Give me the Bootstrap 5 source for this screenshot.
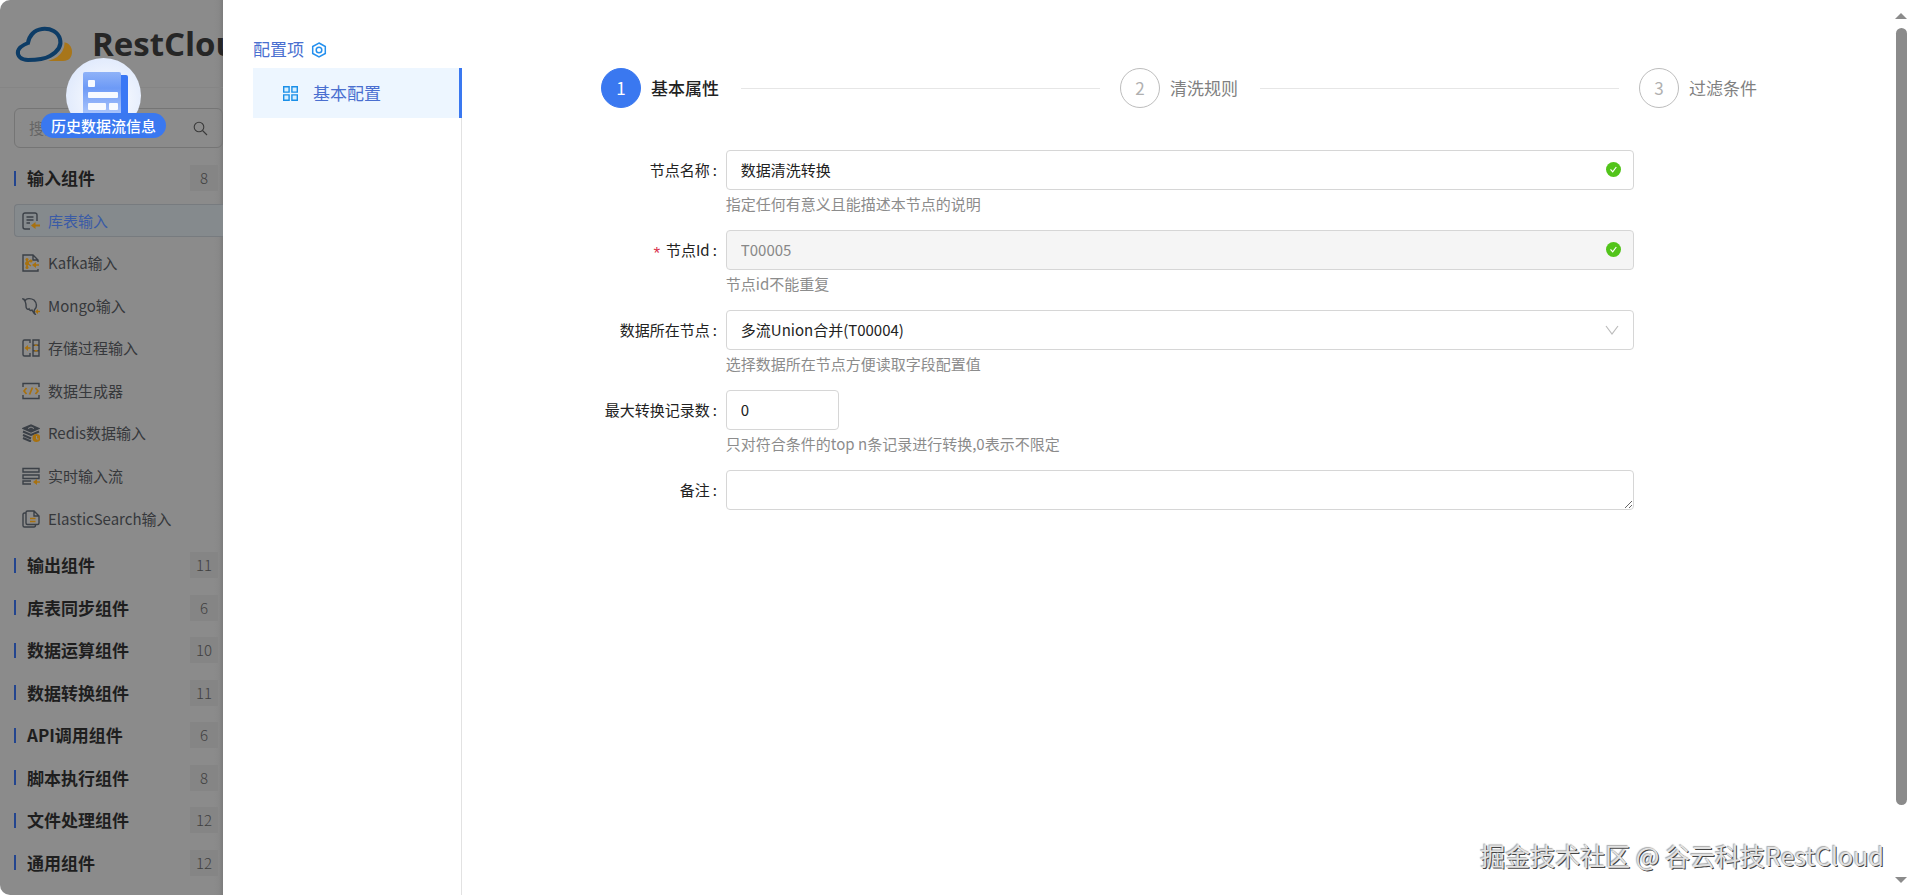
<!DOCTYPE html>
<html lang="zh-CN">
<head>
<meta charset="utf-8">
<meta name="viewport" content="width=device-width, initial-scale=1">
<title>RestCloud 数据清洗转换</title>
<link href="https://cdn.jsdelivr.net/npm/bootstrap@5.3.0/dist/css/bootstrap.min.css" rel="stylesheet">
<style>
  :root { --brand: #3a78f0; --ink: #222; --hint: #8c8c8c; --line: #d6d6d6; --dim: #8b8b8b; }
  body { font-family: "Noto Sans CJK SC", "Noto Sans", sans-serif; font-size: 15px; line-height: 24px; color: var(--ink); background: #fff; }
  a { text-decoration: none; color: inherit; }
  svg { display: block; flex: none; }

  /* dimmed component library behind the drawer */
  .library { width: 223px; flex: none; background: linear-gradient(to left, #7c7c7c, #888 4px, var(--dim) 9px); border-radius: 10px 0 0 10px; color: #36383b; padding-bottom: 11px; }
  .library-head { height: 88px; padding: 0 0 0 14px; gap: 18px; border-bottom: 1px solid #858585; }
  .wordmark { font: 700 33px/40px "Open Sans", sans-serif; color: #262626; }
  .library-search { height: 40px; margin: 20px 0 9px 14px; border: 1px solid #757575; border-radius: 6px; padding: 0 14px; }
  .library-search input { background: none; border: 0; outline: 0; padding: 0; width: 100%; min-width: 0; }
  .library-search input::placeholder { color: #666; opacity: 1; }
  .group-row { flex: 1 1 42px; padding: 0 5px 0 14px; font-size: 17px; font-weight: 700; color: #1e1e1e; }
  .group-row::before { content: ""; width: 2px; height: 15px; background: #23458f; margin-right: 11px; }
  .tally { width: 28px; line-height: 26px; background: #858585; color: #404040; font-size: 15px; font-weight: 300; text-align: center; }
  .row-list { flex: 8 1 336px; }
  .node-row { flex: 1 1 42px; padding-left: 14px; }
  .node-row a { height: 33px; padding-left: 7px; gap: 8px; border: 1px solid transparent; border-right: 0; border-radius: 4px 0 0 4px; }
  .node-row a.current { background: #858a8d; border-color: #777b7f; color: #3a5ba6; }
  .ico { fill: none; stroke: #3b4047; stroke-width: 1.4; }
  .ico .o { stroke: #a8710f; }
  .ico .of { fill: #a8710f; stroke: none; }

  .history { left: 41px; top: 58px; width: 125px; }
  .history span { background: var(--brand); color: #fff; font-weight: 500; line-height: 25px; border-radius: 13px; margin-top: -20px; z-index: 1; }

  /* drawer */
  .settings { width: 239px; flex: none; padding-left: 30px; }
  .settings-title { height: 68px; padding-top: 37px; gap: 7px; font-size: 17px; color: #4a6fd0; }
  .settings-menu { border-right: 1px solid #e2e2e2; }
  .settings-menu a { height: 50px; margin-right: -1px; padding-left: 30px; gap: 15px; background: #edf6ff; border-right: 3px solid var(--brand); color: #4a6fd0; font-size: 17px; }
  .wizard { padding: 68px 135px 0 139px; margin-bottom: 42px; font-size: 17px; color: #808080; }
  .wizard li { gap: 10px; }
  .wizard .dot { width: 40px; height: 40px; border: 1px solid #bdbdbd; border-radius: 50%; color: #b0b0b0; }
  .wizard .on { color: #222; font-weight: 500; }
  .wizard .on .dot { background: var(--brand); border-color: var(--brand); color: #fff; font-weight: 400; }
  .wizard .rule { height: 1px; background: #e6e6e6; margin: 0 20px 0 12px; }
  .field { display: grid; grid-template-columns: 264fr 909fr 258fr; min-height: 80px; }
  .field > label { text-align: right; line-height: 40px; padding-right: 9px; }
  .field > label::after { content: ":"; margin-left: 3px; }
  .need { color: #d9304c; margin-right: 4px; font-family: "Liberation Mono", monospace; font-size: 17px; line-height: 20px; vertical-align: -3px; }
  .field .form-control, .field .form-select { height: 40px; min-height: 40px; padding: 0 14px; border: 1px solid var(--line); border-radius: 4px; font-size: 15px; line-height: 38px; color: var(--ink); background-image: none; }
  .field input.form-control { padding-bottom: 2px; }
  .field .form-control:disabled { background-color: #f5f5f5; color: #888; }
  .field .short { width: 113px; }
  .field .help { color: var(--hint); line-height: 24px; padding-top: 2px; }
  .mark-end { right: 13px; top: 12px; pointer-events: none; }

  .scroller { width: 18px; flex: none; padding: 13px 0 12px; }
  .scroller .thumb { width: 11px; flex: 777; margin-top: 9px; border-radius: 6px; background: #8b8b8b; }
  .scroller .rest { flex: 72; }
  .credit { right: 26px; bottom: 22px; font-size: 25px; line-height: 36px; color: #e2e2e2; text-shadow: 1px 1px 0 #444, -1px -1px 1px #aaa; }
</style>
</head>
<body>
<div class="d-flex min-vh-100 position-relative">

  <aside class="library d-flex flex-column overflow-hidden">
    <header class="library-head d-flex align-items-center">
      <svg width="60" height="40" viewBox="0 0 60 40">
        <path d="M34 37h15c6 0 9-4 9-9 0-6-4-10-10-10z" fill="#a8761a"/>
        <path d="M12 35C6 35 3 31 4 26c1-4 5-7 10-7 0-8 5-14 14-15 9-1 15 3 18 10 3 8-1 16-11 19-8 3-16 2-23 2z" fill="#8b8b8b" stroke="#8b8b8b" stroke-width="7"/>
        <path d="M14 36C7 36 3 32 4 27c1-4 5-6 10-8 1-7 6-13 14-14 9-1 16 3 18 10 2 7-3 13-10 17-7 4-15 4-22 4z" fill="#8b8b8b" stroke="#0d3c66" stroke-width="4"/>
      </svg>
      <span class="wordmark">RestCloud</span>
    </header>

    <div class="library-search d-flex align-items-center">
      <input type="text" placeholder="搜索组件" aria-label="搜索组件">
      <svg width="15" height="15" viewBox="0 0 15 15" fill="none" stroke="#3a3a3a" stroke-width="1.100"><circle cx="6" cy="6" r="4.800"/><path d="M9.500 9.500 14 14"/></svg>
    </div>

    <a href="#" class="group-row d-flex align-items-center"><span class="flex-fill">输入组件</span><span class="tally">8</span></a>

    <ul class="row-list list-unstyled d-flex flex-column mb-1">
      <li class="node-row d-flex flex-column justify-content-center"><a href="#" class="current d-flex align-items-center">
        <svg class="ico" width="18" height="18" viewBox="0 0 18 18"><path d="M15 9V3a2 2 0 0 0-2-2H3a2 2 0 0 0-2 2v12a2 2 0 0 0 2 2h5M4.500 5h7M4.500 8h7M4.500 11H8"/><path class="o" stroke-width="1.800" d="M18 13.500h-6"/><path class="of" d="M9 13.500l4.500-3.500v7z"/></svg>库表输入</a></li>
      <li class="node-row d-flex flex-column justify-content-center"><a href="#" class="d-flex align-items-center">
        <svg class="ico" width="18" height="18" viewBox="0 0 18 18"><path d="M16 8V6l-5-5H1v16h15v-2M11 1v5h5"/><path class="o" d="M5 5v9M5 9l4-3M5 9l4 3M17 11h-4"/><circle class="of" cx="5" cy="5.500" r="1.500"/><circle class="of" cx="5" cy="9.500" r="2"/><circle class="of" cx="5" cy="13.500" r="1.500"/><circle class="of" cx="9" cy="7" r="1.500"/><path class="of" d="M10 11l4-3v6z"/></svg>Kafka输入</a></li>
      <li class="node-row d-flex flex-column justify-content-center"><a href="#" class="d-flex align-items-center">
        <svg class="ico" width="18" height="18" viewBox="0 0 18 18"><path d="M1 2c2 0 1 1 2 2 1-3 6-3 9-1 3 3 3 7 1 9-1 1-1 3 0 5-2-1-2-3-3-4-1 1-3 0-3-1-2 1-3-1-3-3 0-3 0-5-3-7z"/><path class="of" d="M13 14.500l3-2.500v5z"/><path class="o" d="M15 14.500h3"/></svg>Mongo输入</a></li>
      <li class="node-row d-flex flex-column justify-content-center"><a href="#" class="d-flex align-items-center">
        <svg class="ico" width="18" height="18" viewBox="0 0 18 18"><path d="M8 4V1H2.500A1.500 1.500 0 0 0 1 2.500v13A1.500 1.500 0 0 0 2.500 17H8v-3M11 1h6v16h-6zM11 6.300h6M11 11.700h6"/><path class="o" d="M8.500 9H4M12.500 6.300h3M12.500 11.700h3"/><path class="of" d="M2.500 9l3.500-3v6z"/></svg>存储过程输入</a></li>
      <li class="node-row d-flex flex-column justify-content-center"><a href="#" class="d-flex align-items-center">
        <svg class="ico" width="18" height="18" viewBox="0 0 18 18"><path d="M1 5V1.500h16V5M1 13v3.500h16V13"/><path class="o" stroke-width="1.700" d="M4.500 6 2 9l2.500 3M13.500 6 16 9l-2.500 3M10.500 5.500l-3 7"/></svg>数据生成器</a></li>
      <li class="node-row d-flex flex-column justify-content-center"><a href="#" class="d-flex align-items-center">
        <svg class="ico" width="18" height="18" viewBox="0 0 18 18"><path fill="#3b4047" d="M1 4.500 9 1l8 3.500L9 8z"/><path stroke-width="2" d="M1 7.500l8 3.500 8-3.500M1 11l8 3.500M1 14l8 3.500"/><path stroke="#8b8b8b" stroke-width="1" d="M6 4.500l3-1.500 3 1.500"/><circle class="of" cx="14.500" cy="14" r="4"/><path stroke="#8b8b8b" stroke-width="1" d="M14.500 12v3h2"/></svg>Redis数据输入</a></li>
      <li class="node-row d-flex flex-column justify-content-center"><a href="#" class="d-flex align-items-center">
        <svg class="ico" width="18" height="18" viewBox="0 0 18 18"><path d="M1 1.500h16v3.500H1zM1 8h16v3.500H1zM9 14H1v3h8"/><path class="o" d="M18 15h-4"/><path class="of" d="M11 15l4-3v6z"/></svg>实时输入流</a></li>
      <li class="node-row d-flex flex-column justify-content-center"><a href="#" class="d-flex align-items-center">
        <svg class="ico" width="18" height="18" viewBox="0 0 18 18"><path d="M4 3H2.500Q1 3 1 4.500v11Q1 17 2.500 17H12q1.500 0 1.500-2M12 1H5.500Q4 1 4 2.500v10.500Q4 14.500 5.500 14.500h10q1.500 0 1.500-1.500V6zM12 1v5h5"/><path class="o" d="M8 8.500h5.500M8 11.500h5.500"/></svg>ElasticSearch输入</a></li>
    </ul>

    <nav class="row-list d-flex flex-column">
      <a href="#" class="group-row d-flex align-items-center"><span class="flex-fill">输出组件</span><span class="tally">11</span></a>
      <a href="#" class="group-row d-flex align-items-center"><span class="flex-fill">库表同步组件</span><span class="tally">6</span></a>
      <a href="#" class="group-row d-flex align-items-center"><span class="flex-fill">数据运算组件</span><span class="tally">10</span></a>
      <a href="#" class="group-row d-flex align-items-center"><span class="flex-fill">数据转换组件</span><span class="tally">11</span></a>
      <a href="#" class="group-row d-flex align-items-center"><span class="flex-fill">API调用组件</span><span class="tally">6</span></a>
      <a href="#" class="group-row d-flex align-items-center"><span class="flex-fill">脚本执行组件</span><span class="tally">8</span></a>
      <a href="#" class="group-row d-flex align-items-center"><span class="flex-fill">文件处理组件</span><span class="tally">12</span></a>
      <a href="#" class="group-row d-flex align-items-center"><span class="flex-fill">通用组件</span><span class="tally">12</span></a>
    </nav>
  </aside>

  <section class="settings d-flex flex-column">
    <div class="settings-title d-flex align-items-start">配置项
      <svg class="mt-1" width="16" height="18" viewBox="0 0 16 18" fill="none" stroke="#2490ee" stroke-width="1.500"><path d="M8 2l6.300 3.500v7L8 16l-6.300-3.500v-7z"/><circle cx="8" cy="9" r="2.800"/></svg>
    </div>
    <nav class="settings-menu flex-fill">
      <a href="#" class="d-flex align-items-center">
        <svg width="15" height="15" viewBox="0 0 15 15" fill="#d9efff" stroke="#1a8fe8" stroke-width="1.400"><path d="M.7.700h5.400v5.400H.7zM8.900.700h5.400v5.400H8.900zM.7 8.900h5.400v5.400H.7zM8.900 8.900h5.400v5.400H8.900z"/></svg>基本配置</a>
    </nav>
  </section>

  <main class="flex-fill">
    <ol class="wizard list-unstyled d-flex">
      <li class="on d-flex align-items-center flex-fill"><span class="dot d-flex align-items-center justify-content-center">1</span>基本属性<span class="rule flex-fill"></span></li>
      <li class="d-flex align-items-center flex-fill"><span class="dot d-flex align-items-center justify-content-center">2</span>清洗规则<span class="rule flex-fill"></span></li>
      <li class="d-flex align-items-center"><span class="dot d-flex align-items-center justify-content-center">3</span>过滤条件</li>
    </ol>
    <form>
      <div class="field">
        <label for="nodeName">节点名称</label>
        <div>
          <div class="position-relative"><input id="nodeName" class="form-control" type="text" value="数据清洗转换">
            <svg class="mark-end position-absolute" width="15" height="15" viewBox="0 0 15 15"><circle cx="7.500" cy="7.500" r="7.500" fill="#52c41a"/><path d="M4.500 7.300l2.200 2.500 3.600-4.800" fill="none" stroke="#fff" stroke-width="1.200"/></svg></div>
          <div class="help">指定任何有意义且能描述本节点的说明</div>
        </div>
      </div>
      <div class="field">
        <label for="nodeId"><span class="need">*</span>节点Id</label>
        <div>
          <div class="position-relative"><input id="nodeId" class="form-control" type="text" value="T00005" disabled>
            <svg class="mark-end position-absolute" width="15" height="15" viewBox="0 0 15 15"><circle cx="7.500" cy="7.500" r="7.500" fill="#52c41a"/><path d="M4.500 7.300l2.200 2.500 3.600-4.800" fill="none" stroke="#fff" stroke-width="1.200"/></svg></div>
          <div class="help">节点id不能重复</div>
        </div>
      </div>
      <div class="field">
        <label for="source">数据所在节点</label>
        <div>
          <div class="position-relative"><select id="source" class="form-select"><option>多流Union合并(T00004)</option></select>
            <svg class="mark-end position-absolute" width="18" height="15" viewBox="0 0 18 15"><path d="M3 4l6 8 6-8" fill="none" stroke="#bcbcbc" stroke-width="1.200"/></svg></div>
          <div class="help">选择数据所在节点方便读取字段配置值</div>
        </div>
      </div>
      <div class="field">
        <label for="limit">最大转换记录数</label>
        <div>
          <input id="limit" class="form-control short" type="text" value="0">
          <div class="help">只对符合条件的top n条记录进行转换,0表示不限定</div>
        </div>
      </div>
      <div class="field">
        <label for="remark">备注</label>
        <div><textarea id="remark" class="form-control" rows="1"></textarea></div>
      </div>
    </form>
  </main>

  <div class="scroller d-flex flex-column align-items-center" aria-hidden="true">
    <svg width="12" height="6" viewBox="0 0 12 6"><path d="M0 6l6-6 6 6z" fill="#8b8b8b"/></svg>
    <div class="thumb"></div><div class="rest"></div>
    <svg width="12" height="6" viewBox="0 0 12 6"><path d="M0 0l6 6 6-6z" fill="#8b8b8b"/></svg>
  </div>

  <a href="#" class="history position-absolute d-flex flex-column align-items-center">
    <svg width="75" height="75" viewBox="0 0 75 75">
      <defs>
        <radialGradient id="disc" cx=".55" cy=".55" r=".6"><stop offset="0" stop-color="#fff"/><stop offset="1" stop-color="#dfe9fc"/></radialGradient>
        <linearGradient id="sheet" x1="0" y1="0" x2="0" y2="1"><stop offset="0" stop-color="#8fb2f8"/><stop offset=".35" stop-color="#6d9af6"/><stop offset="1" stop-color="#b4ccfc"/></linearGradient>
      </defs>
      <circle cx="37.500" cy="37.500" r="37.500" fill="url(#disc)"/>
      <path d="M50 17h10q2 0 2 2v40H50z" fill="#3a78f5"/>
      <rect x="17" y="14" width="38" height="46" rx="2" fill="url(#sheet)"/>
      <g fill="#f7faff"><rect x="22" y="22" width="7" height="7" rx="1"/><rect x="22" y="34" width="30" height="6" rx="1"/><rect x="22" y="45" width="18" height="7" rx="1"/><rect x="43" y="45" width="9" height="7" rx="1"/></g>
    </svg>
    <span class="w-100 text-center">历史数据流信息</span>
  </a>

  <div class="credit position-absolute">掘金技术社区 @ 谷云科技RestCloud</div>
</div>
<script src="https://cdn.jsdelivr.net/npm/bootstrap@5.3.0/dist/js/bootstrap.bundle.min.js"></script>
</body>
</html>
